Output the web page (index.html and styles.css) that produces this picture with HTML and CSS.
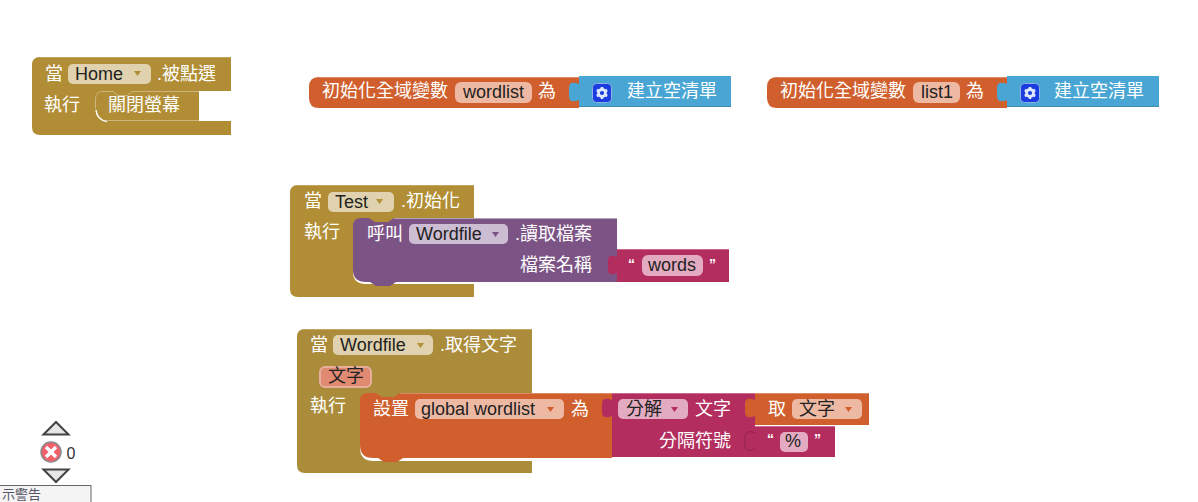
FILE: index.html
```html
<!DOCTYPE html>
<html lang="zh-Hant">
<head>
  <meta charset="UTF-8">
  <title>Blocks</title>
  <link rel="stylesheet" href="styles.css">
</head>
<body>
  <svg class="workspace" width="1198" height="502" viewBox="0 0 1198 502">
    <defs>
      <g id="gear">
        <rect class="gear-bg" x="0.5" y="0.5" width="19" height="19" rx="4"/>
        <circle class="gear-ring" cx="10" cy="10" r="3.5"/>
        <path class="gear-teeth" d="M10 4V6.5M15.2 7L13 8.2M15.2 13L13 11.8M10 16V13.5M4.8 13L7 11.8M4.8 7L7 8.2"/>
      </g>
    </defs>

    <!-- Home click -->
    <path class="block control" d="M40 57H231V91H199V121H231V135H40Q32 135 32 127V65Q32 57 40 57Z"/>
    <path class="block control" d="M103 91H113L118 95H127L132 91H199V121H107Q95 121 95 109V99Q95 91 103 91Z"/>
    <path class="hi hi-stack" d="M95.500 109V99Q95.500 91.500 103 91.500H113L118 95.500H127L132 91.500H199M107 120.500H199"/>
    <path class="inner-shadow" d="M96 110Q97 120 107 121.500"/>
    <path class="hi hi-control" d="M40 57.500H231"/>
    <text class="label" x="45" y="80">當</text>
    <rect class="field f-control" x="68" y="64" width="83" height="20" rx="5"/>
    <text class="value" x="75" y="80">Home</text>
    <path class="arrow a-control" d="M134 71h7l-3.500 5z"/>
    <text class="label" x="157" y="80">.被點選</text>
    <text class="label" x="44" y="111">執行</text>
    <text class="label" x="108" y="111">關閉螢幕</text>

    <!-- wordlist global -->
    <path class="block variable" d="M319 77H579V108H319Q309 108 309 98V87Q309 77 319 77Z"/>
    <path class="hi hi-variable" d="M319 77.500H579"/>
    <text class="label" x="322" y="97">初始化全域變數</text>
    <rect class="field f-variable" x="455" y="82" width="77" height="21" rx="6"/>
    <text class="value" x="463" y="98">wordlist</text>
    <text class="label" x="538" y="97">為</text>
    <path class="block list" d="M579 76H731V107H579V100Q569 104 569 96V88Q569 80 579 84Z"/>
    <path class="lo lo-list" d="M579 106.500H731"/>
    <use href="#gear" x="592" y="83"/>
    <text class="label" x="627" y="97">建立空清單</text>

    <!-- list1 global -->
    <path class="block variable" d="M777 77H1007V108H777Q767 108 767 98V87Q767 77 777 77Z"/>
    <path class="hi hi-variable" d="M777 77.500H1007"/>
    <text class="label" x="780" y="97">初始化全域變數</text>
    <rect class="field f-variable" x="913" y="82" width="47" height="21" rx="6"/>
    <text class="value" x="921" y="98">list1</text>
    <text class="label" x="966" y="97">為</text>
    <path class="block list" d="M1007 76H1159V107H1007V100Q997 104 997 96V88Q997 80 1007 84Z"/>
    <path class="lo lo-list" d="M1007 106.500H1159"/>
    <use href="#gear" x="1020" y="83"/>
    <text class="label" x="1054" y="97">建立空清單</text>

    <!-- Test init -->
    <path class="block control" d="M298 185H474V218H394V226H353V272Q353 284 366 284H474V297H298Q290 297 290 289V193Q290 185 298 185Z"/>
    <path class="block component" d="M361 218H369L375 222H388L394 218H617V282H396L390 286H376L370 282H366Q353 282 353 270V226Q353 218 361 218Z"/>
    <path class="hi hi-control" d="M298 185.500H474"/>
    <path class="hi hi-component" d="M394 218.500H617"/>
    <text class="label" x="304" y="207">當</text>
    <rect class="field f-control" x="328" y="192" width="66" height="20" rx="5"/>
    <text class="value" x="335" y="208">Test</text>
    <path class="arrow a-control" d="M376 199h7l-3.500 5z"/>
    <text class="label" x="401" y="207">.初始化</text>
    <text class="label" x="304" y="238">執行</text>
    <text class="label" x="367" y="240">呼叫</text>
    <rect class="field f-component" x="409" y="224" width="99" height="20" rx="5"/>
    <text class="value" x="416" y="240">Wordfile</text>
    <path class="arrow a-component" d="M492 232h7l-3.500 5z"/>
    <text class="label" x="515" y="240">.讀取檔案</text>
    <text class="label" x="520" y="271">檔案名稱</text>
    <path class="block text-block" d="M617 249H729V282H617V273Q608 277 608 269V261Q608 253 617 257Z"/>
    <path class="hi hi-text" d="M617 249.500H729"/>
    <text class="quote" x="628" y="269">“</text>
    <rect class="field f-text" x="642" y="255" width="61" height="21" rx="6"/>
    <text class="value" x="648" y="271">words</text>
    <text class="quote" x="709" y="269">”</text>

    <!-- Wordfile got text -->
    <path class="block control-b" d="M305 329H532V393H400V401H360V448Q360 461 374 461H532V473H305Q297 473 297 465V337Q297 329 305 329Z"/>
    <path class="block variable" d="M368 393H376L382 397H394L400 393H612V458H403L397 462H384L378 458H373Q360 458 360 445V401Q360 393 368 393Z"/>
    <path class="hi hi-control" d="M305 329.500H532"/>
    <path class="hi hi-variable" d="M400 393.500H612"/>
    <text class="label" x="310" y="351">當</text>
    <rect class="field f-control" x="333" y="335" width="100" height="20" rx="5"/>
    <text class="value" x="340" y="351">Wordfile</text>
    <path class="arrow a-control" d="M417 343h7l-3.500 5z"/>
    <text class="label" x="440" y="351">.取得文字</text>
    <rect class="param" x="320" y="367" width="51" height="20" rx="5"/>
    <text class="value" x="328" y="382">文字</text>
    <text class="label" x="310" y="412">執行</text>
    <text class="label" x="373" y="415">設置</text>
    <rect class="field f-variable" x="415" y="399" width="149" height="20" rx="5"/>
    <text class="value" x="421" y="415">global wordlist</text>
    <path class="arrow a-variable" d="M547 407h7l-3.500 5z"/>
    <text class="label" x="571" y="415">為</text>

    <path class="block text-block" d="M612 393H755V457H612V416Q602 420 602 412V404Q602 396 612 400Z"/>
    <path class="hi hi-text" d="M612 393.500H755"/>
    <rect class="field f-text" x="618" y="399" width="70" height="20" rx="5"/>
    <text class="value" x="626" y="415">分解</text>
    <path class="arrow a-text" d="M671 407h7l-3.500 5z"/>
    <text class="label" x="695" y="415">文字</text>
    <text class="label" x="659" y="447">分隔符號</text>
    <path class="block variable" d="M755 393H869V425H755V416Q745 420 745 412V404Q745 396 755 400Z"/>
    <path class="hi hi-variable" d="M755 393.500H869"/>
    <text class="label" x="768" y="415">取</text>
    <rect class="field f-variable" x="792" y="399" width="70" height="20" rx="5"/>
    <text class="value" x="799" y="415">文字</text>
    <path class="arrow a-variable" d="M845 407h7l-3.500 5z"/>
    <path class="block text-block" d="M755 426H835V457H755V449Q745 453 745 445V437Q745 429 755 433Z"/>
    <path class="tab-edge" d="M755 449Q745 453 745 445V437Q745 429 755 433"/>
    <path class="hi hi-text" d="M755 426.500H835"/>
    <text class="quote" x="767" y="444">“</text>
    <rect class="field f-text" x="780" y="432" width="28" height="20" rx="5"/>
    <text class="value" x="785" y="447">%</text>
    <text class="quote" x="814" y="444">”</text>

    <!-- warning counter -->
    <path class="nav-arrow" d="M43.500 434.500L56 422L68.500 434.500Z"/>
    <path class="nav-arrow" d="M43.500 469.500L56 482L68.500 469.500Z"/>
    <circle class="err" cx="51" cy="452" r="10"/>
    <path class="err-x" d="M46 447L56 457M56 447L46 457"/>
    <text class="count" x="66.500" y="459">0</text>

    <!-- cut-off popup in the corner -->
    <rect class="popup" x="-2" y="485.500" width="93" height="20"/>
    <text class="popup-text" x="2" y="499">示警告</text>
  </svg>
</body>
</html>
```

FILE: styles.css
```css
body {
  margin: 0;
  background-color: #fff;
  overflow: hidden;
}
.workspace {
  display: block;
}
text {
  font-family: "Liberation Sans", "Noto Sans CJK TC", sans-serif;
  font-size: 18px;
}
.label {
  fill: #fff;
}
.value {
  fill: #222;
}
.quote {
  fill: #fff;
  font-size: 14px;
  font-weight: bold;
}

/* block colours */
.control {
  fill: #b18e35;
}
.control-b {
  fill: #ab8c3b;
}
.variable {
  fill: #d05f2d;
}
.list {
  fill: #49a6d4;
}
.component {
  fill: #7c5385;
}
.text-block {
  fill: #b32d5e;
}

/* bevel lines */
.hi, .lo, .tab-edge {
  fill: none;
  stroke-width: 1;
}
.hi-control {
  stroke: #c4a75f;
}
.hi-stack {
  stroke: #cdb67c;
}
.hi-variable {
  stroke: #dd8a66;
}
.hi-component {
  stroke: #b3a0b9;
}
.hi-text {
  stroke: #cc6a8e;
}
.lo-list {
  stroke: #3d8cb4;
}
.tab-edge {
  stroke: #8e2449;
}
.inner-shadow {
  fill: none;
  stroke: #fff;
  stroke-width: 1.5;
}

/* dropdown fields */
.f-control {
  fill: #e0d2ae;
}
.f-variable {
  fill: #eeb9a3;
}
.f-component {
  fill: #cdbdd2;
}
.f-text {
  fill: #e3abc0;
}
.param {
  fill: #e08a72;
  stroke: #e8ae9c;
  stroke-width: 2;
}
.a-control {
  fill: #b18e35;
}
.a-variable {
  fill: #d05f2d;
}
.a-component {
  fill: #7c5385;
}
.a-text {
  fill: #b32d5e;
}
.gear-bg {
  fill: #1a3ce0;
  stroke: #8fb4e4;
}
.gear-ring {
  fill: none;
  stroke: #dfe8ff;
  stroke-width: 2.800;
}
.gear-teeth {
  fill: none;
  stroke: #dfe8ff;
  stroke-width: 2.600;
}

/* warning counter */
.nav-arrow {
  fill: #e6e6e6;
  stroke: #444;
  stroke-width: 2;
}
.err {
  fill: #f2606c;
  stroke: #8a8a8a;
  stroke-width: 1.5;
}
.err-x {
  fill: none;
  stroke: #fff;
  stroke-width: 3.5;
}
.count {
  fill: #333;
  font-size: 16px;
}
.popup {
  fill: #f4f4f4;
  stroke: #666;
  stroke-width: 1;
}
.popup-text {
  fill: #556;
  font-size: 13px;
}
```
